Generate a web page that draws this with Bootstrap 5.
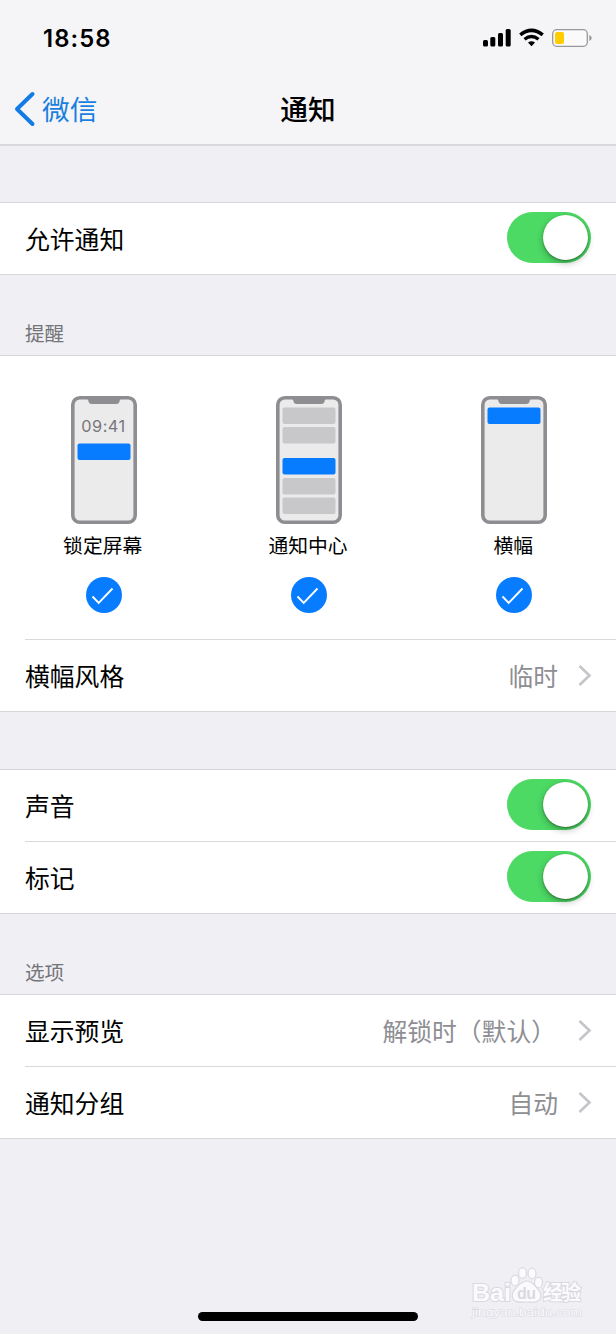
<!DOCTYPE html>
<html lang="zh-CN">
<head>
<meta charset="utf-8">
<meta name="viewport" content="width=device-width, initial-scale=1">
<title>通知</title>
<link href="https://cdn.jsdelivr.net/npm/bootstrap@5.3.0/dist/css/bootstrap.min.css" rel="stylesheet">
<style>
  body { background: #efeff4; color: #000; font-family: "Noto Sans CJK SC", sans-serif; font-size: 24.8px; line-height: 36px; }
  .screen { width: 616px; height: 1334px; overflow: hidden; }
  .top-area { height: 146px; background: #f5f5f7; border-bottom: 2px solid #d7d7dc; }
  .status-row { height: 76px; padding: 0 23px 0 43px; }
  .clock { font: 600 23.8px/28px Inter, sans-serif; letter-spacing: 1.1px; padding-top: 1px; }
  .title-row { height: 66px; font-size: 27.7px; line-height: 40px; }
  .title-row span, .page-title { padding-bottom: 2px; }
  .back-link { color: #1a7fe0; padding-left: 14px; gap: 6px; }
  .page-title { font-weight: 500; }
  .gap-first { height: 56px; }
  .gap-plain { height: 57px; }
  .caption-row { height: 80px; padding: 0 25px 8px; color: #747479; font-size: 19.6px; line-height: 28px; }
  .panel { background: #fff; border: solid #d6d6da; border-width: 1px 0; }
  .line-row { height: 71px; padding: 0 25px 2px 0; margin-left: 25px; }
  .line-row + .line-row, .styles + .line-row { height: 72px; border-top: 1px solid #d9d9dc; }
  .value { color: #8e8e93; }
  .value-long { margin-right: 2px; }
  .chev-icon { margin-left: 20px; margin-right: -1px; }
  .toggle { width: 84px; height: 51px; border-radius: 26px; background: #4cd964; padding: 3px; }
  .knob { width: 45px; height: 45px; border-radius: 50%; background: #fff; box-shadow: 0 3px 7px rgba(0,0,0,.28), 0 1px 2px rgba(0,0,0,.3); }
  .styles { height: 283px; padding-top: 40px; font-size: 19.8px; line-height: 28px; }
  .styles svg { margin-left: 1.8px; }
  .styles .col-4:last-child svg { margin-left: 1px; }
  .style-name { margin: 7px 0 18px; }
  .mono-time { font-family: Inter, sans-serif; font-size: 16.3px; letter-spacing: .5px; }
  .home-bar { width: 220px; height: 9px; border-radius: 5px; background: #000; bottom: 13px; left: 198px; }
  .watermark { left: 466px; top: 1260px; }
</style>
</head>
<body>
<svg class="d-none">
  <symbol id="phone" viewBox="0 0 66 128">
    <rect x="1.8" y="1.8" width="62.4" height="124.4" rx="7" fill="#ebebec" stroke="#8e8e92" stroke-width="3.6"/>
    <path d="M14 2h38l-3 1.500-.6 2.500q-.7 2-2.900 2h-25q-2.200 0-2.900-2l-.6-2.500z" fill="#8e8e92"/>
  </symbol>
  <symbol id="tick" viewBox="0 0 36 36">
    <circle cx="18" cy="18" r="18" fill="#087cff"/>
    <path d="M6.500 19.500l6.200 6.300L26.500 11.500" fill="none" stroke="#fff" stroke-width="1.900"/>
  </symbol>
  <symbol id="chev" viewBox="0 0 14 22">
    <path d="M1.500 2L11.500 11.500L1.500 21" fill="none" stroke="#c5c5ca" stroke-width="2.700"/>
  </symbol>
</svg>
<div class="screen position-relative">
  <header class="top-area">
    <div class="status-row d-flex align-items-center justify-content-between">
      <span class="clock">18:58</span>
      <svg width="111" height="22" viewBox="0 0 111 22">
        <rect x="1" y="13" width="5" height="6.500" rx="1.500"/><rect x="8.300" y="10" width="5" height="9.500" rx="1.500"/><rect x="16" y="6" width="5" height="13.500" rx="1.500"/><rect x="23.700" y="2" width="5" height="17.500" rx="1.500"/>
        <path d="M38.300 7.800Q49.500 -1.200 60.700 7.800" fill="none" stroke="#000" stroke-width="3.600"/>
        <path d="M42.500 12.200Q49.500 6.700 56.500 12.200" fill="none" stroke="#000" stroke-width="3.300"/>
        <path d="M46 15.500Q49.500 12.800 53 15.500L49.500 19.300z"/>
        <rect x="70.700" y="2.700" width="34.600" height="16.600" rx="4" fill="#fafafa" stroke="#98989a" stroke-width="1.300"/>
        <rect x="73" y="5" width="9" height="12" rx="2" fill="#fc0"/>
        <path d="M107.300 8q2.400 1 2.400 3t-2.400 3z" fill="#98989a"/>
      </svg>
    </div>
    <nav class="title-row row g-0 align-items-center">
      <a class="back-link col-4 d-flex align-items-center text-decoration-none" href="#">
        <svg width="22" height="36" viewBox="0 0 22 36"><path d="M18.500 3L3 18L18.500 33" fill="none" stroke="#127be5" stroke-width="4" stroke-linecap="round" stroke-linejoin="round"/></svg><span>微信</span>
      </a>
      <div class="page-title col-4 text-center">通知</div>
    </nav>
  </header>
  <main>
    <div class="gap-first"></div>
    <section class="panel">
      <div class="line-row d-flex align-items-center justify-content-between"><span>允许通知</span><div class="toggle d-flex justify-content-end"><div class="knob"></div></div></div>
    </section>
    <div class="caption-row d-flex align-items-end">提醒</div>
    <section class="panel">
      <div class="styles row g-0 text-center">
        <div class="col-4 d-flex flex-column align-items-center">
          <svg width="66" height="128"><use href="#phone"/><text class="mono-time" x="32.500" y="36" text-anchor="middle" fill="#77777b">09:41</text><rect x="6.500" y="47.500" width="53" height="16.500" rx="2" fill="#087cff"/></svg>
          <div class="style-name">锁定屏幕</div>
          <svg width="36" height="36"><use href="#tick"/></svg>
        </div>
        <div class="col-4 d-flex flex-column align-items-center">
          <svg width="66" height="128"><use href="#phone"/><g fill="#c8c8ca"><rect x="6.500" y="11.500" width="53" height="16.500" rx="2"/><rect x="6.500" y="31" width="53" height="16.500" rx="2"/><rect x="6.500" y="82" width="53" height="16.500" rx="2"/><rect x="6.500" y="101.500" width="53" height="16.500" rx="2"/></g><rect x="6.500" y="62" width="53" height="16.500" rx="2" fill="#087cff"/></svg>
          <div class="style-name">通知中心</div>
          <svg width="36" height="36"><use href="#tick"/></svg>
        </div>
        <div class="col-4 d-flex flex-column align-items-center">
          <svg width="66" height="128"><use href="#phone"/><rect x="6.500" y="11.500" width="53" height="16.500" rx="2" fill="#087cff"/></svg>
          <div class="style-name">横幅</div>
          <svg width="36" height="36"><use href="#tick"/></svg>
        </div>
      </div>
      <div class="line-row d-flex align-items-center"><span class="me-auto">横幅风格</span><span class="value">临时</span><svg class="chev-icon" width="14" height="22"><use href="#chev"/></svg></div>
    </section>
    <div class="gap-plain"></div>
    <section class="panel">
      <div class="line-row d-flex align-items-center justify-content-between"><span>声音</span><div class="toggle d-flex justify-content-end"><div class="knob"></div></div></div>
      <div class="line-row d-flex align-items-center justify-content-between"><span>标记</span><div class="toggle d-flex justify-content-end"><div class="knob"></div></div></div>
    </section>
    <div class="caption-row d-flex align-items-end">选项</div>
    <section class="panel">
      <div class="line-row d-flex align-items-center"><span class="me-auto">显示预览</span><span class="value value-long">解锁时（默认）</span><svg class="chev-icon" width="14" height="22"><use href="#chev"/></svg></div>
      <div class="line-row d-flex align-items-center"><span class="me-auto">通知分组</span><span class="value">自动</span><svg class="chev-icon" width="14" height="22"><use href="#chev"/></svg></div>
    </section>
  </main>
  <svg class="watermark position-absolute" width="124" height="62" viewBox="0 0 124 62" fill="#fbfbfd" stroke="#d9d9df" stroke-width="1.200">
    <g font-family="Liberation Sans, sans-serif" font-weight="700" paint-order="stroke" stroke-width="2">
      <text x="6" y="41" font-size="24" textLength="39" lengthAdjust="spacingAndGlyphs">Bai</text>
      <text x="77" y="40" font-size="20" textLength="38" font-family="Noto Sans CJK SC, sans-serif">经验</text>
      <text x="6" y="56" font-size="11.500" font-weight="400" stroke-width="1" textLength="110" lengthAdjust="spacingAndGlyphs">jingyan.baidu.com</text>
    </g>
    <ellipse cx="49" cy="20.500" rx="4" ry="5.300"/><ellipse cx="56.500" cy="13" rx="4" ry="5.300"/><ellipse cx="66" cy="13.500" rx="4" ry="5.300"/><ellipse cx="72.500" cy="22.500" rx="4" ry="5.300"/>
    <path d="M61 21c5 0 7 4 10 7s5 7 3 11c-2 4-7 3-13 3s-12 1-14-3 0-8 3-11 6-7 11-7z"/>
    <text x="51" y="39" font-family="Liberation Sans, sans-serif" font-weight="700" font-size="16" fill="#d9d9df" stroke="none" textLength="19">du</text>
  </svg>
  <div class="home-bar position-absolute"></div>
</div>
<script src="https://cdn.jsdelivr.net/npm/bootstrap@5.3.0/dist/js/bootstrap.bundle.min.js"></script>
</body>
</html>
